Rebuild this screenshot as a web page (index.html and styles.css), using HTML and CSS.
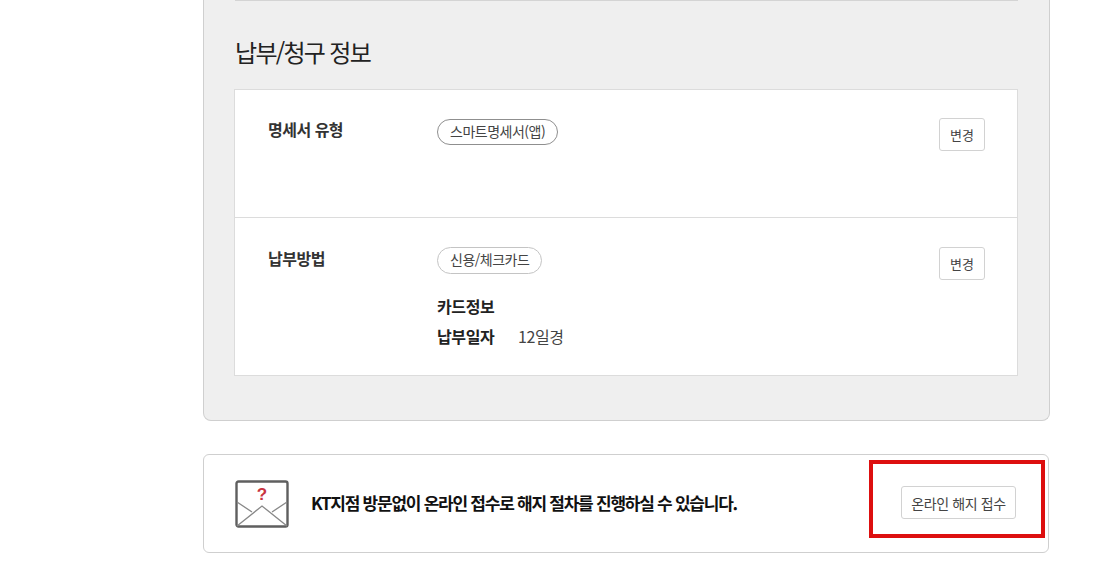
FILE: index.html
```html
<!DOCTYPE html>
<html lang="ko">
<head>
    <meta charset="UTF-8">
    <meta name="viewport" content="width=device-width, initial-scale=1.0">
    <title>납부/청구 정보</title>
    <link rel="stylesheet" href="styles.css">
</head>
<body>
    <div class="container">
        <section class="panel">
            <div class="panel-line"></div>
            <h2 class="panel-title">납부/청구 정보</h2>

            <div class="info-card">
                <div class="info-row row-bill">
                    <div class="info-label">명세서 유형</div>
                    <div class="info-body">
                        <span class="pill">스마트명세서(앱)</span>
                    </div>
                    <button class="btn-small">변경</button>
                </div>
                <div class="info-row row-pay">
                    <div class="info-label">납부방법</div>
                    <div class="info-body">
                        <span class="pill pill-light">신용/체크카드</span>
                        <div class="detail-line detail-first"><strong>카드정보</strong></div>
                        <div class="detail-line"><strong>납부일자</strong><span>12일경</span></div>
                    </div>
                    <button class="btn-small btn-pay">변경</button>
                </div>
            </div>
        </section>

        <section class="notice">
            <svg class="notice-icon" width="54" height="48" viewBox="0 0 54 48">
                <rect x="1.5" y="1.5" width="51" height="45" rx="2" fill="#fff" stroke="#5f5f5f" stroke-width="2.4"/>
                <path d="M2 22l15 10M52 22l-15 10M2 46l25-20 25 20" fill="none" stroke="#888" stroke-width="1.3"/>
                <text x="27" y="20" class="icon-mark">?</text>
            </svg>
            <p class="notice-text">KT지점 방문없이 온라인 접수로 해지 절차를 진행하실 수 있습니다.</p>
            <button class="btn-online">온라인 해지 접수</button>
            <div class="highlight"></div>
        </section>
    </div>
</body>
</html>
```

FILE: styles.css
```css
* {
    margin: 0;
    padding: 0;
    box-sizing: border-box;
}

body {
    font-family: 'Noto Sans CJK KR', 'Noto Sans', sans-serif;
    background: #fff;
    color: #222;
    overflow: hidden;
}

.container {
    width: 847px;
    margin-left: 203px;
}

.panel {
    height: 421px;
    padding: 0 31px 0 31px;
    background: #efefef;
    border: 1px solid #cfcfcf;
    border-top: none;
    border-radius: 0 0 8px 8px;
}

.panel-line {
    height: 1px;
    background: #d4d4d4;
}

.panel-title {
    margin-top: 33px;
    height: 55px;
    font-size: 24px;
    font-weight: 400;
    line-height: 35px;
    letter-spacing: -1.7px;
    color: #222;
}

.info-card {
    background: #fff;
    border: 1px solid #dcdcdc;
    margin-left: -1px;
    height: 287px;
}

.info-row {
    display: flex;
    align-items: flex-start;
    padding: 28px 32px 0 33px;
}

.row-bill {
    height: 128px;
    border-bottom: 1px solid #dcdcdc;
}

.row-pay {
    height: 157px;
}

.info-label {
    width: 169px;
    margin-top: -2px;
    font-size: 16px;
    font-weight: 700;
    line-height: 26px;
    letter-spacing: -0.5px;
    color: #333;
}

.row-pay .info-label {
    margin-top: -1px;
}

.info-body {
    flex: 1;
}

.pill {
    display: inline-block;
    height: 26px;
    padding: 0 12px;
    border: 1px solid #8f8f8f;
    border-radius: 13px;
    font-size: 14px;
    line-height: 22px;
    color: #444;
    letter-spacing: -0.5px;
}

.pill-light {
    height: 27px;
    border-color: #c4c4c4;
    border-radius: 14px;
}

.detail-line {
    display: flex;
    height: 30px;
    font-size: 16px;
    line-height: 30px;
    letter-spacing: -0.4px;
    color: #444;
}

.detail-first {
    margin-top: 17px;
}

.detail-line strong {
    width: 81px;
    font-weight: 700;
    color: #222;
}

.btn-small {
    width: 46px;
    height: 33px;
    background: #fff;
    border: 1px solid #d2d2d2;
    border-radius: 3px;
    font-family: inherit;
    font-size: 13px;
    color: #444;
}

.btn-pay {
    margin-top: 1px;
}

.notice {
    position: relative;
    display: flex;
    align-items: center;
    width: 846px;
    height: 99px;
    margin-top: 33px;
    padding: 0 32px 0 31px;
    border: 1px solid #cfcfcf;
    border-radius: 6px;
}

.notice-icon {
    flex: none;
    margin-right: 22px;
}

.icon-mark {
    font-family: 'Liberation Sans', sans-serif;
    font-size: 17px;
    font-weight: 700;
    fill: #c8343f;
    text-anchor: middle;
}

.notice-text {
    flex: 1;
    margin-top: -2px;
    font-size: 17px;
    font-weight: 700;
    letter-spacing: -1.25px;
    color: #111;
}

.btn-online {
    width: 115px;
    height: 33px;
    margin-top: -2px;
    background: #fff;
    border: 1px solid #d2d2d2;
    border-radius: 3px;
    font-family: inherit;
    font-size: 14px;
    letter-spacing: -0.4px;
    color: #444;
}

/* red annotation drawn over the box */
.highlight {
    position: absolute;
    top: 5px;
    right: 3px;
    width: 176px;
    height: 78px;
    border: 4px solid #dd0f0f;
}
```
